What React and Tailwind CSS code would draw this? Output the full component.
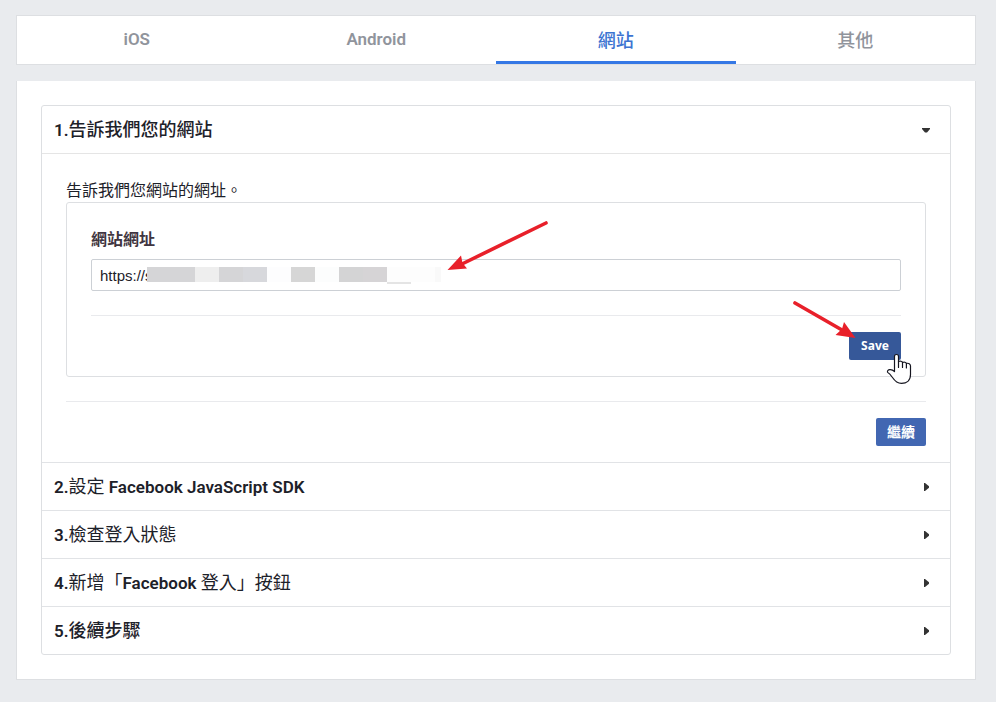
import { useState } from "react";
import clsx from "clsx";

const tabs = ["iOS", "Android", "網站", "其他"];

const CJK = "font-['Noto_Sans_CJK_TC',sans-serif]";

// Chinese parts of a heading are set one step larger and lighter than the Latin ones.
const steps = [
  [["1."], ["告訴我們您的網站", "text-[18px] font-medium"]],
  [["2."], ["設定", "text-[18px] font-normal"], [" Facebook JavaScript SDK"]],
  [["3."], ["檢查登入狀態", "text-[18px] font-normal"]],
  [["4."], ["新增「", "text-[18px] font-normal"], ["Facebook "], ["登入」按鈕", "text-[18px] font-normal"]],
  [["5."], ["後續步驟", "text-[18px] font-medium"]],
];

const mask = [
  "w-12 bg-[#d5d5d7]",
  "w-6 bg-[#eeeeee]",
  "w-6 bg-[#d5d5d7]",
  "w-6 bg-[#d7d8dc]",
  "w-6 bg-[#fdfdfe]",
  "w-6 bg-[#d6d6d6]",
  "w-6 bg-[#fcfdfd]",
  "w-6 bg-[#d4d4d5]",
  "w-6 bg-[#d6d4d6]",
  "w-6 bg-[#fdfdfd] border-b-2 border-[#e4e4e4] box-content",
  "w-6 bg-[#fdfdfd]",
  "w-1.5 bg-[#f9f9f9]",
];

function StepHeader({ parts, open, onClick }) {
  return (
    <h2>
      <button
        type="button"
        aria-expanded={open}
        onClick={onClick}
        className="flex h-[47px] w-full items-center justify-between pr-5 pl-3 text-left text-[17px] leading-6 font-semibold text-[#1d2129]"
      >
        <span className="whitespace-pre">
          {parts.map(([text, style]) => (
            <span key={text} className={style}>
              {text}
            </span>
          ))}
        </span>
        <svg width="8" height="8" viewBox="0 0 8 8" fill="#333" aria-hidden="true">
          {open ? <path d="M0 2h8v1L5 6.500H3L0 3z" /> : <path d="M2 0h1l4 3.200v1.600L3 8H2z" />}
        </svg>
      </button>
    </h2>
  );
}

function UrlArrow() {
  return (
    <svg
      className="pointer-events-none absolute -top-10 left-[356px]"
      width="104"
      height="54"
      viewBox="447 219 104 54"
      fill="#e8202a"
      aria-hidden="true"
    >
      <path d="M463 263.500L546 223" stroke="#e8202a" strokeWidth="3.600" strokeLinecap="round" />
      <path d="M447.500 270L461 255.500L462.500 263L467 268.500Z" />
    </svg>
  );
}

function SaveArrow() {
  return (
    <svg
      className="pointer-events-none absolute -top-8 -left-14"
      width="64"
      height="40"
      viewBox="793 300 64 40"
      fill="#e8202a"
      aria-hidden="true"
    >
      <path d="M795 303L842 330" stroke="#e8202a" strokeWidth="3.600" strokeLinecap="round" />
      <path d="M855.500 338L844 322L842 329L835.500 335Z" />
    </svg>
  );
}

function HandCursor() {
  return (
    <svg
      className="pointer-events-none absolute top-[21px] left-[37px]"
      width="26"
      height="32"
      viewBox="0 0 26 32"
      fill="#fff"
      stroke="#15151f"
      strokeWidth="1.200"
      strokeLinecap="round"
      strokeLinejoin="round"
      aria-hidden="true"
    >
      <path d="M8.500 18.500V3.500C8.500 .8 12.500 .8 12.500 3.500V8.500C14 7.800 16.200 8.200 16.500 9.500C18 8.800 20 9.200 20.400 10.500C22.500 9.800 24.500 10.800 24.500 13V21.500C24.500 27.500 20.500 30.400 15.500 30.400C11 30.400 8.500 27.500 6.500 24.500C5 22.200 3.300 20 1.500 19.200C1 16.200 5.500 15.500 8.500 18.500Z" />
      <path d="M12.500 8.500v6M16.500 9.500v5M20.400 10.500v4.500" fill="none" />
    </svg>
  );
}

export default function App() {
  const [tab, setTab] = useState(2);
  const [open, setOpen] = useState(0);
  const [url, setUrl] = useState("https://s");

  return (
    <main className="min-h-screen bg-[#e9ebee] py-[15px] pr-5 pl-4 font-[Roboto,'Noto_Sans_CJK_TC',sans-serif] text-[#1d2129]">
      <div role="tablist" className="grid grid-cols-4 border border-[#dddfe2] bg-white">
        {tabs.map((name, i) => (
          <button
            key={name}
            type="button"
            role="tab"
            aria-selected={tab === i}
            onClick={() => setTab(i)}
            className={clsx(
              "h-12 border-b-[3px] leading-6",
              i < 2 ? "pt-px text-[17px] font-semibold" : "pt-1 text-[18px] font-medium",
              tab === i ? "border-[#3578e5] text-[#3b73d1]" : "border-transparent text-[#90949c]",
            )}
          >
            {name}
          </button>
        ))}
      </div>

      <section className="mt-4 border border-t-0 border-[#dddfe2] bg-white p-6">
        <div className="divide-y divide-[#e1e3e6] rounded-[3px] border border-[#dddfe2]">
          {steps.map((parts, i) => (
            <div key={i}>
              <StepHeader parts={parts} open={open === i} onClick={() => setOpen(i)} />
              {i === 0 && open === 0 && (
                <div className="border-t border-[#e5e5e5] px-6 pt-6 pb-4">
                  <p className={clsx(CJK, "pb-0.5 text-[16px] leading-[22px]")}>
                    告訴我們您網站的網址。
                  </p>
                  <form
                    onSubmit={(e) => e.preventDefault()}
                    className="rounded-[3px] border border-[#dddfe2] px-6 pt-6 pb-4"
                  >
                    <label
                      htmlFor="site-url"
                      className={clsx(
                        CJK,
                        "block pb-0.5 text-[16px] leading-[22px] font-bold text-[#3f3540]",
                      )}
                    >
                      網站網址
                    </label>
                    <div className="relative mt-2">
                      <input
                        id="site-url"
                        type="text"
                        value={url}
                        onChange={(e) => setUrl(e.target.value)}
                        className="block h-8 w-full rounded-[2px] border border-[#ccd0d5] px-2 font-['Liberation_Sans',sans-serif] text-[15px]"
                      />
                      <div className="pointer-events-none absolute top-2 left-14 flex items-start">
                        {mask.map((tone, n) => (
                          <span key={n} className={clsx("h-[15px]", tone)} />
                        ))}
                      </div>
                      <UrlArrow />
                    </div>
                    <div className="mt-6 flex justify-end border-t border-[#e9eaed] pt-4">
                      <div className="relative">
                        <button
                          type="submit"
                          className="block h-7 w-[52px] rounded-[2px] bg-[#365899] font-['Noto_Sans',sans-serif] text-[12px] font-bold text-white"
                        >
                          Save
                        </button>
                        <SaveArrow />
                        <HandCursor />
                      </div>
                    </div>
                  </form>
                  <div className="mt-6 flex justify-end border-t border-[#e9eaed] pt-4">
                    <button
                      type="button"
                      onClick={() => setOpen(1)}
                      className={clsx(
                        CJK,
                        "h-7 w-[50px] rounded-[2px] bg-[#4267b2] pb-0.5 text-[14px] leading-6 font-bold text-white",
                      )}
                    >
                      繼續
                    </button>
                  </div>
                </div>
              )}
            </div>
          ))}
        </div>
      </section>
    </main>
  );
}
